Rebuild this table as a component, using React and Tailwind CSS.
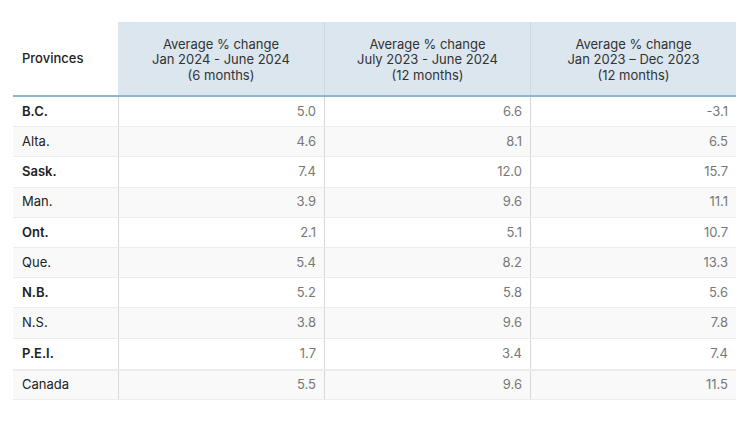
import React from "react";

const rows = [
  ["B.C.", "5.0", "6.6", "-3.1", true],
  ["Alta.", "4.6", "8.1", "6.5", false],
  ["Sask.", "7.4", "12.0", "15.7", true],
  ["Man.", "3.9", "9.6", "11.1", false],
  ["Ont.", "2.1", "5.1", "10.7", true],
  ["Que.", "5.4", "8.2", "13.3", false],
  ["N.B.", "5.2", "5.8", "5.6", true],
  ["N.S.", "3.8", "9.6", "7.8", false],
  ["P.E.I.", "1.7", "3.4", "7.4", true],
];

const headers = [
  ["Average % change", "Jan 2024 - June 2024", "(6 months)"],
  ["Average % change", "July 2023 - June 2024", "(12 months)"],
  ["Average % change", "Jan 2023 – Dec 2023", "(12 months)"],
];

export default function App() {
  return (
    <div
      className="w-[750px] h-[422px] bg-white pt-[22px] pl-[13px]"
      style={{ fontFamily: 'Inter, "Liberation Sans", Arial, sans-serif' }}
    >
      <div className="w-[723px]">
        <div className="flex h-[75px] border-b-2 border-[#8db6cf]">
          <div className="w-[105px] flex items-center pl-[9px] pt-[1px] text-[13px] font-medium text-[#222]">
            Provinces
          </div>
          {headers.map((h, i) => (
            <div
              key={i}
              className={`w-[206px] flex flex-col items-center justify-center pt-[3px] bg-[#dbe6ef] text-[13px] leading-[15.5px] text-[#333] ${i > 0 ? "border-l border-[#cfd8df]" : ""}`}
            >
              <div>{h[0]}</div>
              <div>{h[1]}</div>
              <div>{h[2]}</div>
            </div>
          ))}
        </div>
        {rows.map((r, idx) => (
          <div
            key={idx}
            className={`flex h-[30.2px] ${idx < rows.length - 1 ? "border-b border-[#ececec]" : ""} ${idx % 2 === 1 ? "bg-[#f9f9f9]" : "bg-white"} text-[13px]`}
          >
            <div className={`w-[105px] flex items-center pl-[9px] text-[#222] ${r[4] ? "font-semibold" : ""}`}>
              {r[0]}
            </div>
            {[1, 2, 3].map((c) => (
              <div
                key={c}
                className="w-[206px] flex items-center justify-end pr-[8px] border-l border-[#d8d8d8] text-[#777]"
              >
                {r[c]}
              </div>
            ))}
          </div>
        ))}
        <div className="flex h-[31px] border-t-2 border-[#8db6cf] bg-[#f9f9f9] text-[13px] border-b border-[#ececec]">
          <div className="w-[105px] flex items-center pl-[9px] text-[#222]">Canada</div>
          {["5.5", "9.6", "11.5"].map((v, i) => (
            <div
              key={i}
              className="w-[206px] flex items-center justify-end pr-[8px] border-l border-[#d8d8d8] text-[#777]"
            >
              {v}
            </div>
          ))}
        </div>
      </div>
    </div>
  );
}
